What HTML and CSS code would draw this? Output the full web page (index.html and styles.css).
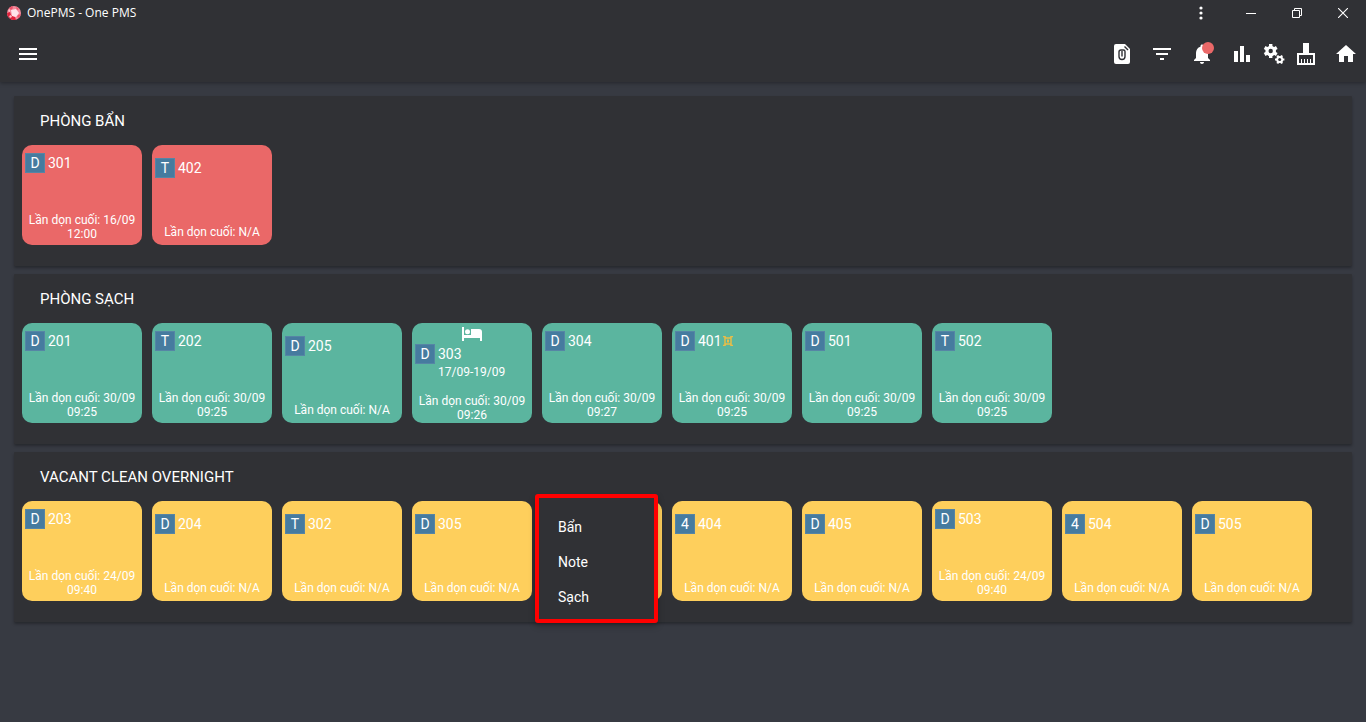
FILE: index.html
```html
<!DOCTYPE html>
<html lang="vi">
<head>
<meta charset="utf-8">
<title>OnePMS - One PMS</title>
<link rel="stylesheet" href="styles.css">
</head>
<body>
<header class="header">
  <div class="titlebar">
    <svg class="logo" width="14" height="14" viewBox="0 0 14 14" aria-hidden="true"><circle cx="7" cy="7" r="7" fill="#f58a9c"/><path d="M0 7l3-1 1 3 4 2 1 2.700A7 7 0 0 1 0 7z" fill="#e0203a"/><path d="M4 4l5-1 3 4-3 4-4-1z" fill="#ffe3ea"/><path d="M2 2l3-2 1 2-2 2zM9 1l3 2-2 1zM11 9l3-1-2 4-2-1z" fill="#ee5268"/><path d="M2 10l2-1 1 2-2 1zM1 5l2-2v3z" fill="#ffc3cd"/></svg>
    <span class="app-name">OnePMS - One PMS</span>
    <div class="window-controls">
      <button class="win-btn win-more" aria-label="Menu"><svg width="4" height="14" viewBox="0 0 4 14" fill="#fff"><circle cx="2" cy="2" r="1.6"/><circle cx="2" cy="7" r="1.6"/><circle cx="2" cy="12" r="1.6"/></svg></button>
      <button class="win-btn" aria-label="Minimize"><svg width="10" height="10" viewBox="0 0 10 10"><path d="M0 5.5h10" stroke="#fff"/></svg></button>
      <button class="win-btn" aria-label="Restore"><svg width="10" height="10" viewBox="0 0 10 10" fill="none" stroke="#fff"><path d="M.5 2.5h7v7h-7zM2.500 2.500v-2h7v7h-2"/></svg></button>
      <button class="win-btn" aria-label="Close"><svg width="10" height="10" viewBox="0 0 10 10"><path d="M0 0l10 10M10 0L0 10" stroke="#fff" stroke-width="1.1"/></svg></button>
    </div>
  </div>
  <nav class="toolbar">
    <button class="tool tool-menu" aria-label="Menu"><svg width="24" height="24" viewBox="0 0 24 24"><path d="M3 6h18v2H3zM3 11h18v2H3zM3 16h18v2H3z"/></svg></button>
    <button class="tool" aria-label="File"><svg width="24" height="24" viewBox="0 0 24 24"><path d="M6 2h9l5 5v13a2 2 0 0 1-2 2H6a2 2 0 0 1-2-2V4a2 2 0 0 1 2-2z"/><path d="M14.500 4.500l3.500 3.500" class="cut"/><path d="M12 9v5.500M9 9.500v5a3 3 0 0 0 6 0V9.500a1.500 1.500 0 0 0-1.500-1.500H11a2 2 0 0 0-2 2" class="cut"/></svg></button>
    <button class="tool" aria-label="Filter"><svg width="24" height="24" viewBox="0 0 24 24"><path d="M10 18h4v-2h-4v2zM3 6v2h18V6H3zm3 7h12v-2H6v2z"/></svg></button>
    <button class="tool" aria-label="Notifications"><svg width="24" height="24" viewBox="0 0 24 24"><path d="M12 22c1.100 0 2-.9 2-2h-4c0 1.100.89 2 2 2zm6-6v-5c0-3.070-1.640-5.640-4.500-6.320V4c0-.83-.67-1.500-1.500-1.500s-1.500.67-1.500 1.500v.68C7.630 5.360 6 7.920 6 11v5l-2 2v1h16v-1l-2-2z"/><circle cx="18" cy="6" r="6" fill="#ea6868"/></svg></button>
    <button class="tool" aria-label="Statistics"><svg width="24" height="24" viewBox="0 0 24 24"><path d="M4 9h4v11H4zM10 4h4v16h-4zM16 13h4v7h-4z"/></svg></button>
    <button class="tool tool-narrow" aria-label="Settings"><svg width="24" height="24" viewBox="0 0 24 24"><circle cx="8.700" cy="9" r="5.300"/><path class="teeth" d="M8.700 2v14M2.640 5.500l12.120 7M2.640 12.500l12.120-7"/><circle class="hole" cx="8.700" cy="9" r="2.200"/><circle cx="17.700" cy="17.500" r="3.500"/><path class="teeth teeth-small" d="M13 17.500h9.400M15.350 13.430l4.700 8.140M20.050 13.430l-4.700 8.140"/><circle class="hole" cx="17.700" cy="17.500" r="1.500"/></svg></button>
    <button class="tool" aria-label="Cleaning"><svg width="24" height="24" viewBox="0 0 24 24"><path fill-rule="evenodd" d="M9 1h6v10h6v12H3V11h6zM5 13v8h2v-4h1v4h2v-4h1v4h2v-4h1v4h2v-4h1v4h2v-8z"/></svg></button>
    <a class="tool" href="#" aria-label="Home"><svg width="24" height="24" viewBox="0 0 24 24"><path d="M10 20v-6h4v6h5v-8h3L12 3 2 12h3v8z"/></svg></a>
  </nav>
</header>
<main class="board">
  <section class="panel">
    <h2 class="panel-title">PHÒNG BẨN</h2>
    <div class="rooms dirty">
      <button class="room"><span class="head"><b class="tag">D</b>301</span><span class="last">Lần dọn cuối: 16/09 12:00</span></button>
      <button class="room never"><span class="head"><b class="tag">T</b>402</span><span class="last">Lần dọn cuối: N/A</span></button>
    </div>
  </section>
  <section class="panel">
    <h2 class="panel-title">PHÒNG SẠCH</h2>
    <div class="rooms clean">
      <button class="room"><span class="head"><b class="tag">D</b>201</span><span class="last">Lần dọn cuối: 30/09 09:25</span></button>
      <button class="room"><span class="head"><b class="tag">T</b>202</span><span class="last">Lần dọn cuối: 30/09 09:25</span></button>
      <button class="room never"><span class="head"><b class="tag">D</b>205</span><span class="last">Lần dọn cuối: N/A</span></button>
      <button class="room occupied"><svg class="bed" width="20" height="14" viewBox="0 0 20 14"><path fill="#fff" d="M0 0h2v8h7V2h8a3 3 0 0 1 3 3v9h-2v-3H2v3H0z"/><circle cx="5.500" cy="4.700" r="2.500" fill="#fff"/></svg><span class="head"><b class="tag">D</b>303</span><span class="stay">17/09-19/09</span><span class="last">Lần dọn cuối: 30/09 09:26</span></button>
      <button class="room"><span class="head"><b class="tag">D</b>304</span><span class="last">Lần dọn cuối: 30/09 09:27</span></button>
      <button class="room"><span class="head"><b class="tag">D</b>401<svg class="mark" width="10" height="10" viewBox="0 0 10 10"><path d="M2 2h6v6H2zM0 .5h2l.5 1.500M10 .5H8L7.500 2M0 9.500h2L2.500 8M10 9.500H8L7.500 8" fill="none" stroke="#e9bd48" stroke-width="1.500"/><path d="M4 3.500h2v3H4z" fill="#e9bd48"/></svg></span><span class="last">Lần dọn cuối: 30/09 09:25</span></button>
      <button class="room"><span class="head"><b class="tag">D</b>501</span><span class="last">Lần dọn cuối: 30/09 09:25</span></button>
      <button class="room"><span class="head"><b class="tag">T</b>502</span><span class="last">Lần dọn cuối: 30/09 09:25</span></button>
    </div>
  </section>
  <section class="panel">
    <h2 class="panel-title">VACANT CLEAN OVERNIGHT</h2>
    <div class="rooms vacant">
      <button class="room"><span class="head"><b class="tag">D</b>203</span><span class="last">Lần dọn cuối: 24/09 09:40</span></button>
      <button class="room never"><span class="head"><b class="tag">D</b>204</span><span class="last">Lần dọn cuối: N/A</span></button>
      <button class="room never"><span class="head"><b class="tag">T</b>302</span><span class="last">Lần dọn cuối: N/A</span></button>
      <button class="room never"><span class="head"><b class="tag">D</b>305</span><span class="last">Lần dọn cuối: N/A</span></button>
      <div class="room-slot">
        <button class="room" aria-label="Room"></button>
        <div class="menu" role="menu">
          <button class="menu-item" role="menuitem">Bẩn</button>
          <button class="menu-item" role="menuitem">Note</button>
          <button class="menu-item" role="menuitem">Sạch</button>
        </div>
      </div>
      <button class="room never"><span class="head"><b class="tag">4</b>404</span><span class="last">Lần dọn cuối: N/A</span></button>
      <button class="room never"><span class="head"><b class="tag">D</b>405</span><span class="last">Lần dọn cuối: N/A</span></button>
      <button class="room"><span class="head"><b class="tag">D</b>503</span><span class="last">Lần dọn cuối: 24/09 09:40</span></button>
      <button class="room never"><span class="head"><b class="tag">4</b>504</span><span class="last">Lần dọn cuối: N/A</span></button>
      <button class="room never"><span class="head"><b class="tag">D</b>505</span><span class="last">Lần dọn cuối: N/A</span></button>
    </div>
  </section>
</main>
</body>
</html>
```
FILE: styles.css
```css
* { box-sizing: border-box; }
body {
  margin: 0;
  min-height: 100vh;
  background: #373a42;
  color: #fff;
  font: 400 14px/20px Roboto, sans-serif;
}
button { margin: 0; padding: 0; border: 0; background: none; color: inherit; font: inherit; cursor: pointer; }
svg { display: block; }

.header { background: #303135; box-shadow: 0 1px 4px rgba(0, 0, 0, .35); }
.titlebar { display: flex; align-items: center; height: 26px; padding-left: 7px; }
.app-name { margin-left: 6px; font: 400 12px/16px "Open Sans", sans-serif; }
.window-controls { display: flex; align-self: stretch; margin-left: auto; }
.win-btn { display: flex; align-items: center; justify-content: center; width: 46px; }
.win-more { width: 54px; }

.toolbar { display: flex; align-items: center; height: 56px; }
.tool { display: flex; align-items: center; justify-content: center; width: 40px; height: 40px; fill: #fff; }
.tool-narrow { width: 24px; }
.tool-menu { margin-left: 8px; margin-right: auto; }
.cut { fill: none; stroke: #303135; stroke-width: 1.4; }
.teeth { stroke: #fff; stroke-width: 3.4; }
.teeth-small { stroke-width: 2.2; }
.hole { fill: #303135; }

.board { display: flex; flex-direction: column; gap: 8px; padding: 14px; }
.panel { padding: 15px 8px 21px; border-radius: 1px; background: #303135; box-shadow: 0 2px 3px rgba(0, 0, 0, .3); }
.panel-title { margin: 0 0 14px 18px; font-size: 15px; font-weight: 400; line-height: 20px; }
.rooms { display: flex; flex-wrap: wrap; gap: 10px; }
.dirty { --room: #ea6868; }
.clean { --room: #5bb59f; }
.vacant { --room: #fecf5c; }
.room {
  display: flex;
  flex-direction: column;
  width: 120px;
  height: 100px;
  padding: 8px 3px 4px;
  border-radius: 10px;
  background: var(--room);
}
.never { padding-top: 13px; padding-bottom: 6px; }
.occupied { padding-top: 4px; padding-bottom: 1px; }
.head { display: flex; align-items: center; height: 20px; }
.tag { width: 20px; margin-right: 3px; border: 1px solid #5685a5; background: #467b9f; font-weight: 400; line-height: 18px; text-align: center; }
.mark { margin-left: 1px; }
.bed { align-self: center; margin-bottom: 3px; }
.stay { align-self: flex-start; margin-left: 23px; font-size: 12px; line-height: 16px; }
.last { align-self: center; margin-top: auto; font-size: 12px; line-height: 14px; text-align: center; }

.room-slot { position: relative; }
.menu {
  position: absolute;
  top: -7px;
  left: -7px;
  z-index: 1;
  display: flex;
  flex-direction: column;
  width: 123px;
  padding: 11px 0 5px;
  border: 4px solid #f00;
  border-radius: 3px;
  background: #303135;
  box-shadow: 0 3px 6px rgba(0, 0, 0, .25);
}
.menu-item { height: 35px; padding-left: 19px; text-align: left; }
```
